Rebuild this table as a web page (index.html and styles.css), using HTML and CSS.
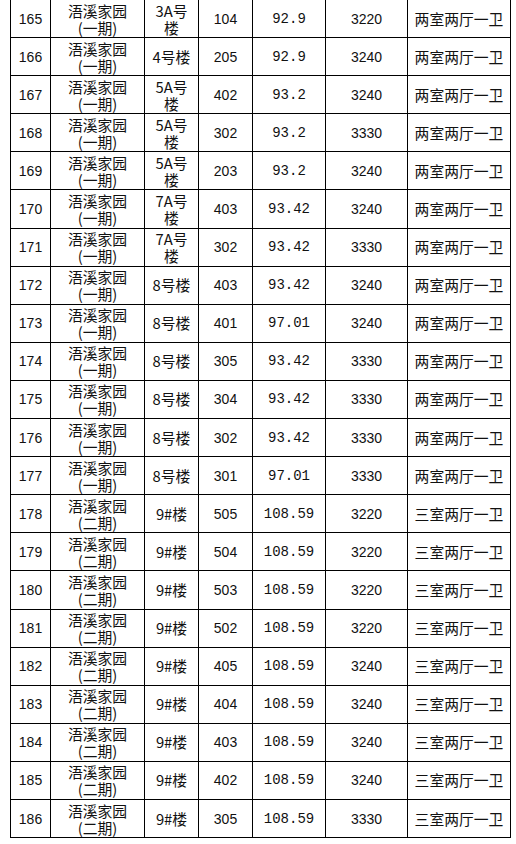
FILE: index.html
```html
<!DOCTYPE html>
<html lang="zh-CN">
<head>
<meta charset="utf-8">
<title>房源表</title>
<link rel="stylesheet" href="styles.css">
</head>
<body>
<table class="sheet">
<colgroup>
<col class="c1"><col class="c2"><col class="c3"><col class="c4"><col class="c5"><col class="c6"><col class="c7">
</colgroup>
<tbody>
<tr><td class="num">165</td><td class="cn"><span class="ln">浯溪家园</span><span class="ln">(一期)</span></td><td class="cn"><span class="ln">3A号</span><span class="ln">楼</span></td><td class="num">104</td><td class="mono">92.9</td><td class="num">3220</td><td class="cn">两室两厅一卫</td></tr>
<tr><td class="num">166</td><td class="cn"><span class="ln">浯溪家园</span><span class="ln">(一期)</span></td><td class="cn">4号楼</td><td class="num">205</td><td class="mono">92.9</td><td class="num">3240</td><td class="cn">两室两厅一卫</td></tr>
<tr><td class="num">167</td><td class="cn"><span class="ln">浯溪家园</span><span class="ln">(一期)</span></td><td class="cn"><span class="ln">5A号</span><span class="ln">楼</span></td><td class="num">402</td><td class="mono">93.2</td><td class="num">3240</td><td class="cn">两室两厅一卫</td></tr>
<tr><td class="num">168</td><td class="cn"><span class="ln">浯溪家园</span><span class="ln">(一期)</span></td><td class="cn"><span class="ln">5A号</span><span class="ln">楼</span></td><td class="num">302</td><td class="mono">93.2</td><td class="num">3330</td><td class="cn">两室两厅一卫</td></tr>
<tr><td class="num">169</td><td class="cn"><span class="ln">浯溪家园</span><span class="ln">(一期)</span></td><td class="cn"><span class="ln">5A号</span><span class="ln">楼</span></td><td class="num">203</td><td class="mono">93.2</td><td class="num">3240</td><td class="cn">两室两厅一卫</td></tr>
<tr><td class="num">170</td><td class="cn"><span class="ln">浯溪家园</span><span class="ln">(一期)</span></td><td class="cn"><span class="ln">7A号</span><span class="ln">楼</span></td><td class="num">403</td><td class="mono">93.42</td><td class="num">3240</td><td class="cn">两室两厅一卫</td></tr>
<tr><td class="num">171</td><td class="cn"><span class="ln">浯溪家园</span><span class="ln">(一期)</span></td><td class="cn"><span class="ln">7A号</span><span class="ln">楼</span></td><td class="num">302</td><td class="mono">93.42</td><td class="num">3330</td><td class="cn">两室两厅一卫</td></tr>
<tr><td class="num">172</td><td class="cn"><span class="ln">浯溪家园</span><span class="ln">(一期)</span></td><td class="cn">8号楼</td><td class="num">403</td><td class="mono">93.42</td><td class="num">3240</td><td class="cn">两室两厅一卫</td></tr>
<tr><td class="num">173</td><td class="cn"><span class="ln">浯溪家园</span><span class="ln">(一期)</span></td><td class="cn">8号楼</td><td class="num">401</td><td class="mono">97.01</td><td class="num">3240</td><td class="cn">两室两厅一卫</td></tr>
<tr><td class="num">174</td><td class="cn"><span class="ln">浯溪家园</span><span class="ln">(一期)</span></td><td class="cn">8号楼</td><td class="num">305</td><td class="mono">93.42</td><td class="num">3330</td><td class="cn">两室两厅一卫</td></tr>
<tr><td class="num">175</td><td class="cn"><span class="ln">浯溪家园</span><span class="ln">(一期)</span></td><td class="cn">8号楼</td><td class="num">304</td><td class="mono">93.42</td><td class="num">3330</td><td class="cn">两室两厅一卫</td></tr>
<tr><td class="num">176</td><td class="cn"><span class="ln">浯溪家园</span><span class="ln">(一期)</span></td><td class="cn">8号楼</td><td class="num">302</td><td class="mono">93.42</td><td class="num">3330</td><td class="cn">两室两厅一卫</td></tr>
<tr><td class="num">177</td><td class="cn"><span class="ln">浯溪家园</span><span class="ln">(一期)</span></td><td class="cn">8号楼</td><td class="num">301</td><td class="mono">97.01</td><td class="num">3330</td><td class="cn">两室两厅一卫</td></tr>
<tr><td class="num">178</td><td class="cn"><span class="ln">浯溪家园</span><span class="ln">(二期)</span></td><td class="cn">9#楼</td><td class="num">505</td><td class="mono">108.59</td><td class="num">3220</td><td class="cn">三室两厅一卫</td></tr>
<tr><td class="num">179</td><td class="cn"><span class="ln">浯溪家园</span><span class="ln">(二期)</span></td><td class="cn">9#楼</td><td class="num">504</td><td class="mono">108.59</td><td class="num">3220</td><td class="cn">三室两厅一卫</td></tr>
<tr><td class="num">180</td><td class="cn"><span class="ln">浯溪家园</span><span class="ln">(二期)</span></td><td class="cn">9#楼</td><td class="num">503</td><td class="mono">108.59</td><td class="num">3220</td><td class="cn">三室两厅一卫</td></tr>
<tr><td class="num">181</td><td class="cn"><span class="ln">浯溪家园</span><span class="ln">(二期)</span></td><td class="cn">9#楼</td><td class="num">502</td><td class="mono">108.59</td><td class="num">3220</td><td class="cn">三室两厅一卫</td></tr>
<tr><td class="num">182</td><td class="cn"><span class="ln">浯溪家园</span><span class="ln">(二期)</span></td><td class="cn">9#楼</td><td class="num">405</td><td class="mono">108.59</td><td class="num">3240</td><td class="cn">三室两厅一卫</td></tr>
<tr><td class="num">183</td><td class="cn"><span class="ln">浯溪家园</span><span class="ln">(二期)</span></td><td class="cn">9#楼</td><td class="num">404</td><td class="mono">108.59</td><td class="num">3240</td><td class="cn">三室两厅一卫</td></tr>
<tr><td class="num">184</td><td class="cn"><span class="ln">浯溪家园</span><span class="ln">(二期)</span></td><td class="cn">9#楼</td><td class="num">403</td><td class="mono">108.59</td><td class="num">3240</td><td class="cn">三室两厅一卫</td></tr>
<tr><td class="num">185</td><td class="cn"><span class="ln">浯溪家园</span><span class="ln">(二期)</span></td><td class="cn">9#楼</td><td class="num">402</td><td class="mono">108.59</td><td class="num">3240</td><td class="cn">三室两厅一卫</td></tr>
<tr><td class="num">186</td><td class="cn"><span class="ln">浯溪家园</span><span class="ln">(二期)</span></td><td class="cn">9#楼</td><td class="num">305</td><td class="mono">108.59</td><td class="num">3330</td><td class="cn">三室两厅一卫</td></tr>
</tbody>
</table>
</body>
</html>
```

FILE: styles.css
```css
html, body {
  margin: 0;
  padding: 0;
  background: #ffffff;
}
body {
  padding: 0 0 0 10px;
  font-family: "Noto Sans CJK SC", "DejaVu Sans", sans-serif;
  color: #111;
}
.sheet {
  border-collapse: collapse;
  table-layout: fixed;
  width: 501px;
  margin-top: -1px;
}
.c1 { width: 40px; }
.c2 { width: 94px; }
.c3 { width: 54px; }
.c4 { width: 54px; }
.c5 { width: 73px; }
.c6 { width: 82px; }
.c7 { width: 103px; }
.sheet tr {
  height: 38.1px;
}
.sheet td {
  border: 1px solid #000;
  padding: 0;
  text-align: center;
  vertical-align: middle;
  overflow: hidden;
  white-space: nowrap;
}
.cn {
  font-family: "Noto Sans CJK SC", sans-serif;
  font-size: 14.8px;
  line-height: 18px;
  font-weight: 400;
}
.ln {
  display: block;
  height: 17px;
  line-height: 17px;
  overflow: visible;
}
.num {
  font-family: "Liberation Sans", "DejaVu Sans", sans-serif;
  font-size: 14px;
  line-height: 18px;
}
.mono {
  font-family: "Liberation Mono", "DejaVu Sans Mono", monospace;
  font-size: 14px;
  line-height: 18px;
}
```
